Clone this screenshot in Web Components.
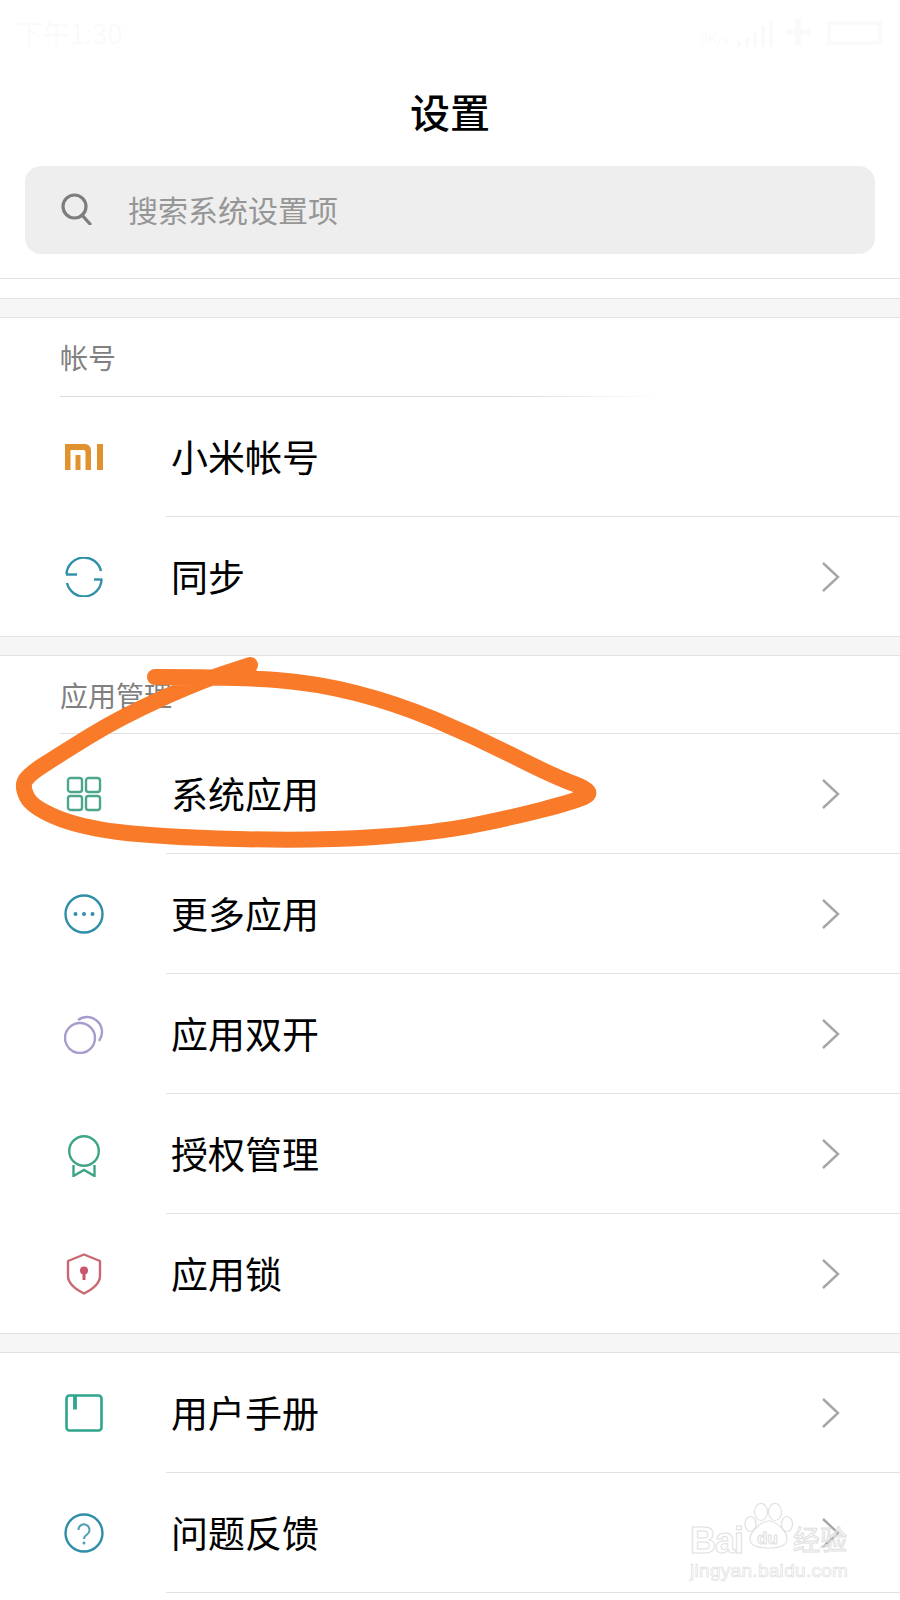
<!DOCTYPE html>
<html lang="zh-CN">
<head>
<meta charset="utf-8">
<title>设置</title>
<style>
  html, body { margin: 0; background: #fff; }
  body {
    width: 900px; height: 1600px; overflow: hidden; position: relative;
    font-family: "Noto Sans CJK SC", "Liberation Sans", sans-serif;
  }
</style>
</head>
<body>
<settings-page>
  <status-strip></status-strip>
  <page-title>设置</page-title>
  <search-box>搜索系统设置项</search-box>
  <section-band></section-band>

  <settings-section label="帐号" fade>
    <settings-row text="小米帐号" no-arrow>
      <svg viewBox="0 0 38 26" width="38" height="26" fill="#e0922e"><path d="M0 0h20a6 6 0 0 1 6 6v20h-5.500V8a2 2 0 0 0-2-2H5.500v20H0z"/><path d="M10.500 11h5v15h-5z"/><path d="M32 0h6v26h-6z"/></svg>
    </settings-row>
    <settings-row text="同步" last style="height:119px">
      <svg viewBox="0 0 40 40" width="40" height="40" fill="none" stroke="#2f8ea8" stroke-width="2.400"><path d="M2.500 17A17.500 17.500 0 0 1 37 14"/><path d="M37.500 23A17.500 17.500 0 0 1 3 26"/><path d="M2 17.500h11"/><path d="M30 22.500h8.500"/></svg>
    </settings-row>
  </settings-section>
  <section-band></section-band>

  <settings-section label="应用管理">
    <settings-row text="系统应用">
      <svg viewBox="0 0 36 36" width="36" height="36" fill="none" stroke="#4da58c" stroke-width="2.400"><rect x="2" y="2" width="14" height="14" rx="2.500"/><rect x="20" y="2" width="14" height="14" rx="2.500"/><rect x="2" y="20" width="14" height="14" rx="2.500"/><rect x="20" y="20" width="14" height="14" rx="2.500"/></svg>
    </settings-row>
    <settings-row text="更多应用">
      <svg viewBox="0 0 40 40" width="40" height="40" fill="none" stroke="#2f8ea8" stroke-width="2.400"><circle cx="20" cy="20" r="18.500"/><g fill="#2f8ea8" stroke="none"><circle cx="11.500" cy="20" r="2"/><circle cx="20" cy="20" r="2"/><circle cx="28.500" cy="20" r="2"/></g></svg>
    </settings-row>
    <settings-row text="应用双开">
      <svg viewBox="0 0 40 40" width="40" height="40" fill="none" stroke="#a99ccd" stroke-width="2.400"><circle cx="16" cy="24" r="15"/><path d="M14 6A15 15 0 0 1 35 27"/></svg>
    </settings-row>
    <settings-row text="授权管理">
      <svg style="margin-top:4px" viewBox="0 0 32 42" width="32" height="42" fill="none" stroke="#3ea488" stroke-width="2.400"><circle cx="16" cy="16" r="14.800"/><path d="M5.500 30v11L16 35l10.500 6V30"/></svg>
    </settings-row>
    <settings-row text="应用锁" last style="height:119px">
      <svg viewBox="0 0 36 42" width="36" height="42" fill="none" stroke="#c96a72" stroke-width="2.400"><path d="M18 1.500 34 8v15c0 8-7 13-16 17.500C9 36 2 31 2 23V8z" stroke-linejoin="round"/><circle cx="18" cy="17.500" r="4" fill="#c9566a" stroke="none"/><path d="M18 18v9" stroke="#c9566a" stroke-width="3"/></svg>
    </settings-row>
  </settings-section>
  <section-band></section-band>

  <settings-section>
    <settings-row text="用户手册">
      <svg viewBox="0 0 38 38" width="38" height="38" fill="none" stroke="#2ea58c" stroke-width="2.600"><rect x="1.500" y="1.500" width="35" height="35" rx="3"/><path d="M10 1.500v14" stroke-width="3.800"/></svg>
    </settings-row>
    <settings-row text="问题反馈">
      <svg viewBox="0 0 40 40" width="40" height="40" fill="none" stroke="#2f8ea8" stroke-width="2.400"><circle cx="20" cy="20" r="18.500"/><path d="M14.500 17a5.500 5.500 0 1 1 8.500 4.500c-2 1.300-3 2.200-3 4.500" stroke-width="2" stroke="#4f9fb5"/><circle cx="20" cy="30" r="1.500" fill="#4f9fb5" stroke="none"/></svg>
    </settings-row>
  </settings-section>
</settings-page>

<scribble-mark></scribble-mark>
<baidu-mark></baidu-mark>

<script>
class SettingsPage extends HTMLElement {
  constructor() {
    super();
    this.attachShadow({ mode: "open" });
    this.shadowRoot.innerHTML = `
      <style>
        :host { display: flex; flex-direction: column; width: 900px; height: 1600px; overflow: hidden; background: #fff; color: #000; }
      </style>
      <slot></slot>`;
  }
}

class StatusStrip extends HTMLElement {
  constructor() {
    super();
    this.attachShadow({ mode: "open" });
    this.shadowRoot.innerHTML = `
      <style>
        :host { display: flex; flex: none; justify-content: space-between; align-items: center; box-sizing: border-box; height: 56px; padding: 8px 13px 0 16px; color: #fafafa; font-size: 27px; font-family: "Noto Sans CJK SC", sans-serif; filter: blur(.7px); }
        .right { display: flex; align-items: flex-end; gap: 8px; font-size: 14px; }
      </style>
      <span>下午1:30</span>
      <span class="right">
        <span>0K/s</span>
        <svg width="150" height="32" viewBox="0 0 150 32" fill="#fafafa"><path d="M0 26h4v5H0zM8 22h4v9H8zM16 16h4v15h-4zM24 10h4v21h-4zM32 4h4v27h-4z"/><path d="M58 3h6v26h-6zM49 13h24v6H49z"/><path d="M90 5h55v24H90zM94 9v16h47V9z" fill-rule="evenodd"/></svg>
      </span>`;
  }
}

class PageTitle extends HTMLElement {
  constructor() {
    super();
    this.attachShadow({ mode: "open" });
    this.shadowRoot.innerHTML = `
      <style>
        :host { display: flex; flex: none; justify-content: center; align-items: center; height: 110px; font-size: 40px; font-weight: 500; line-height: 1; color: #000; }
      </style>
      <slot></slot>`;
  }
}

class SearchBox extends HTMLElement {
  constructor() {
    super();
    this.attachShadow({ mode: "open" });
    this.shadowRoot.innerHTML = `
      <style>
        :host { display: block; flex: none; }
        .box { display: flex; align-items: center; margin: 0 25px; height: 88px; box-sizing: border-box; padding: 0 0 2px 36px; background: #eeeeee; border-radius: 16px; font-size: 30px; color: #969696; }
        svg { flex: none; margin-right: 36px; }
        .rule { height: 1px; margin: 24px 0 19px; background: #e2e2e2; }
      </style>
      <div class="box">
        <svg width="31" height="32" viewBox="0 0 31 32" fill="none" stroke="#7d7d7d" stroke-width="3.200"><circle cx="13.500" cy="13.500" r="11.500"/><path d="M21 22l8 9" stroke-linecap="round"/></svg>
        <slot></slot>
      </div>
      <div class="rule"></div>`;
  }
}

// the gray gap between two groups, hairline on both edges
class SectionBand extends HTMLElement {
  constructor() {
    super();
    this.attachShadow({ mode: "open" });
    this.shadowRoot.innerHTML = `
      <style>
        :host { display: block; flex: none; height: 20px; box-sizing: border-box; background: #f6f6f6; border-top: 1px solid #e2e2e2; border-bottom: 1px solid #e2e2e2; }
      </style>`;
  }
}

class SettingsSection extends HTMLElement {
  constructor() {
    super();
    this.attachShadow({ mode: "open" });
    const label = this.getAttribute("label");
    const head = label ? `<div class="head"><span>${label}</span></div>` : "";
    this.shadowRoot.innerHTML = `
      <style>
        :host { display: block; flex: none; }
        .head { height: 78px; margin-left: 60px; box-sizing: border-box; padding-top: 19px; font-size: 28px; line-height: 40px; color: #808080; border-bottom: 1px solid #e0e0e0; }
        :host([fade]) .head { height: 79px; border-bottom: 0; position: relative; }
        :host([fade]) .head::after { content: ""; position: absolute; left: 0; bottom: 0; width: 600px; height: 1px; background: linear-gradient(90deg, #dcdcdc 75%, #fff); }
      </style>
      ${head}
      <slot></slot>`;
  }
}

class SettingsRow extends HTMLElement {
  constructor() {
    super();
    this.attachShadow({ mode: "open" });
    const arrow = this.hasAttribute("no-arrow") ? "" : `
      <svg class="arrow" width="20" height="32" viewBox="0 0 20 32" fill="none" stroke="#a6a6a6" stroke-width="2.400"><path d="M2 2l15 14L2 30"/></svg>`;
    this.shadowRoot.innerHTML = `
      <style>
        :host { display: flex; align-items: stretch; height: 120px; box-sizing: border-box; }
        .icon { flex: none; width: 166px; box-sizing: border-box; padding-left: 2px; display: flex; align-items: center; justify-content: center; }
        .body { flex: 1; display: flex; align-items: center; justify-content: space-between; padding: 0 59px 0 5px; font-size: 37px; line-height: 1; color: #000; border-bottom: 1px solid #e2e2e2; }
        :host([last]) .body { border-bottom: 0; }
        .arrow { flex: none; }
      </style>
      <div class="icon"><slot></slot></div>
      <div class="body"><span>${this.getAttribute("text")}</span>${arrow}</div>`;
  }
}

// hand drawn orange ring lying over the list
class ScribbleMark extends HTMLElement {
  constructor() {
    super();
    this.attachShadow({ mode: "open" });
    const pts = [[155,677],[237,677],[316,683],[395,703],[474,736],[553,776],[596,792],[572,802],[514,817],[435,833],[316,841],[158,837],[79,827],[32,807],[22,787],[28,775],[59,755],[119,718],[198,682],[250,665]];
    let d = `M${pts[0]}`;
    for (let i = 1; i < pts.length - 1; i++) {
      const mx = (pts[i][0] + pts[i + 1][0]) / 2, my = (pts[i][1] + pts[i + 1][1]) / 2;
      d += `Q${pts[i]} ${mx},${my}`;
    }
    d += `L${pts[pts.length - 1]}`;
    this.shadowRoot.innerHTML = `
      <style>
        :host { display: block; position: absolute; left: 0; top: 0; width: 900px; height: 1000px; pointer-events: none; }
      </style>
      <svg width="900" height="1000" viewBox="0 0 900 1000" fill="none" stroke="#f97a28" stroke-width="16" stroke-linecap="round" stroke-linejoin="round">
        <path d="${d}"/>
        <path d="M248 668l2 5" stroke-width="14"/>
      </svg>`;
  }
}

class BaiduMark extends HTMLElement {
  constructor() {
    super();
    this.attachShadow({ mode: "open" });
    this.shadowRoot.innerHTML = `
      <style>
        :host { display: block; position: absolute; left: 688px; top: 1503px; width: 172px; height: 84px; color: transparent; font-family: "Liberation Sans", "Noto Sans CJK SC", sans-serif; pointer-events: none; }
        span { position: absolute; white-space: nowrap; -webkit-text-stroke: 1px #e0e0e0; line-height: 1; }
        .bai { left: 2px; top: 20px; font-size: 36px; font-weight: 700; letter-spacing: -1px; }
        .du { left: 69px; top: 27px; font-size: 17px; font-weight: 700; }
        .jy { left: 105px; top: 22px; font-size: 27px; font-family: "Noto Sans CJK SC", sans-serif; letter-spacing: 0; }
        .url { left: 2px; top: 58px; font-size: 19px; letter-spacing: .3px; -webkit-text-stroke: .7px #e0e0e0; }
        svg { position: absolute; left: 56px; top: 0; }
      </style>
      <svg width="50" height="46" viewBox="0 0 50 46" fill="#fff" stroke="#e0e0e0" stroke-width="1.200">
        <ellipse cx="17" cy="9" rx="6.500" ry="8.500"/><ellipse cx="31" cy="9" rx="6.500" ry="8.500"/><ellipse cx="6.500" cy="21" rx="5.500" ry="7.500"/><ellipse cx="43" cy="21" rx="5.500" ry="7.500"/>
        <path d="M25 18c7 0 18 10 18 18 0 7-7 9-18 9S6 43 6 36c0-8 12-18 19-18z"/>
      </svg>
      <span class="bai">Bai</span>
      <span class="du">du</span>
      <span class="jy">经验</span>
      <span class="url">jingyan.baidu.com</span>`;
  }
}

customElements.define("settings-page", SettingsPage);
customElements.define("status-strip", StatusStrip);
customElements.define("page-title", PageTitle);
customElements.define("search-box", SearchBox);
customElements.define("section-band", SectionBand);
customElements.define("settings-section", SettingsSection);
customElements.define("settings-row", SettingsRow);
customElements.define("scribble-mark", ScribbleMark);
customElements.define("baidu-mark", BaiduMark);
</script>
</body>
</html>
